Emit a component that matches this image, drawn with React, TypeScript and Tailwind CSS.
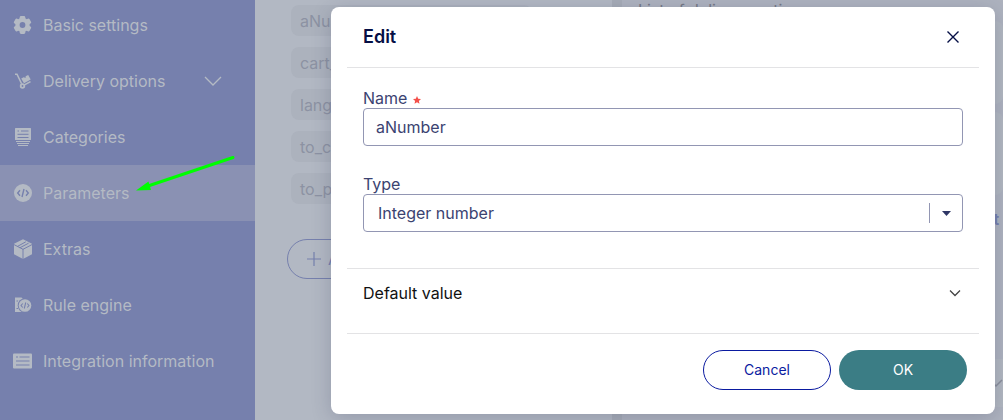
import React, { useState } from 'react';

const CodeMark = ({ cx, cy, s = 1 }: { cx: number; cy: number; s?: number }) => (
  <g transform={`translate(${cx} ${cy}) scale(${s})`} fill="none" stroke="#7680ad" strokeWidth="1.4">
    <path d="M-3 -2.7 L-5.3 0 L-3 2.7 M3 -2.7 L5.3 0 L3 2.7 M1 -4 L-1 4" />
  </g>
);

const icons: Record<string, React.ReactNode> = {
  settings: (
    <>
      <circle cx="9.5" cy="9" r="7.2" />
      {[0, 60, 120].map((angle) => (
        <rect key={angle} x="6.7" y="0" width="5.6" height="18" rx="1.4" transform={`rotate(${angle} 9.5 9)`} />
      ))}
      <circle cx="9.5" cy="9" r="2.9" fill="#7680ad" />
    </>
  ),
  delivery: (
    <>
      <path d="M2 2.2h2l4.6 9.6" fill="none" stroke="currentColor" strokeWidth="1.5" />
      <path d="M8.2 6.6l3-1.6.5 1 1.3-.7-.5-1 2.700-1.400 2.500 4.600-6.700 3.800z" />
      <path d="M11.500 12.800l6-3.200" fill="none" stroke="currentColor" strokeWidth="1.500" />
      <circle cx="9.500" cy="14" r="1.800" fill="none" stroke="currentColor" strokeWidth="1.800" />
    </>
  ),
  categories: (
    <>
      <rect x="2" y="0" width="16" height="12" rx=".5" />
      <path d="M4.500 3h1.500M8 3h7.500M4.500 6.300h11M4.500 9.500h11" stroke="#7680ad" strokeWidth="1" />
      <path d="M3 13.500h14M4 15.500h12M5 17.500h10" stroke="currentColor" strokeWidth="1" />
    </>
  ),
  parameters: (
    <>
      <circle cx="10" cy="9" r="9" />
      <CodeMark cx={10} cy={9} />
    </>
  ),
  extras: (
    <>
      <path d="M10-.8l9 4.600v10.400L10 19 1 14.200V3.800z" />
      <path d="M1 4.600l9 4.700 9-4.700M10 9v10M4.200 6.600l8.600-4.800M6.800 7.800l8.800-4.600" fill="none" stroke="#7680ad" strokeWidth="1" />
    </>
  ),
  rules: (
    <>
      <path d="M2 1.500h6.500l1.500 1.500v13H2z" />
      <circle cx="12" cy="9.500" r="7.300" fill="#7680ad" />
      <circle cx="12" cy="9.500" r="6.300" />
      <path d="M3.500 5h1.500M3.500 12.500h1.500" stroke="#7680ad" />
      <CodeMark cx={12} cy={9.5} s={0.75} />
    </>
  ),
  integration: (
    <>
      <rect x="0" y="1.500" width="19" height="15" rx="1" />
      <path d="M3 5h2M6.500 5h10M3 9h13.500M3 13h13.500" stroke="#7680ad" strokeWidth="1.200" />
    </>
  ),
};

const menu = [
  { icon: 'settings', label: 'Basic settings' },
  { icon: 'delivery', label: 'Delivery options', expandable: true },
  { icon: 'categories', label: 'Categories' },
  { icon: 'parameters', label: 'Parameters', active: true },
  { icon: 'extras', label: 'Extras' },
  { icon: 'rules', label: 'Rule engine' },
  { icon: 'integration', label: 'Integration information' },
];

const parameters = ['aNu', 'cart_', 'lang', 'to_c', 'to_p'];

const Sidebar = () => (
  <nav className="-mt-[3px] w-[255px] shrink-0 bg-[#7680ad] text-[#b4bac4]">
    {menu.map((item) => (
      <a
        key={item.label}
        href="#"
        className={`flex h-14 items-center gap-3 pl-[13px] pr-[33px] ${item.active ? 'bg-[#8a91b3]' : ''}`}
      >
        <svg className="size-[18px] shrink-0 overflow-visible" viewBox="0 0 18 18" fill="currentColor">
          {icons[item.icon]}
        </svg>
        <span className="grow whitespace-nowrap">{item.label}</span>
        {item.expandable && (
          <svg className="h-4 w-[18px]" viewBox="0 0 18 16" fill="none" stroke="currentColor" strokeWidth="1.300">
            <path d="M1 4l8 8 8-8" />
          </svg>
        )}
      </a>
    ))}
  </nav>
);

const Background = () => (
  <main className="flex grow overflow-hidden bg-[#b2b8c3]">
    <div className="w-[357px] shrink-0 pl-8 pt-[5px]">
      <ul className="flex flex-col gap-[11px] pl-1 pr-20">
        {parameters.map((name) => (
          <li key={name} className="flex h-[31px] items-center rounded-lg bg-[#acb2bd] px-[9px] text-[#8c92a3]">
            {name}
          </li>
        ))}
      </ul>
      <button className="mt-[35px] flex h-10 w-44 items-center gap-1.5 rounded-full border border-[#7680ad] px-[18px] text-[#7680ad]">
        <svg className="size-4" viewBox="0 0 16 16" stroke="currentColor" strokeWidth="1.200">
          <path d="M8 1v14M1 8h14" />
        </svg>
        A
      </button>
    </div>
    <div className="w-2.5 shrink-0 bg-[#a6acb7]" />
    <div className="flex grow flex-col bg-[#aeb3bf]">
      <p className="pl-4 leading-[21px] text-[#757986]">List of delivery options</p>
      <div className="flex flex-col gap-2">
        <div className="h-[83px] rounded-lg bg-[#b2b8c1]" />
        <div className="h-[83px] rounded-lg bg-[#b2b8c1]" />
      </div>
      <p className="pr-1 pt-3 text-right font-bold text-[#7680ad]">t</p>
      <div className="mt-32 flex h-12 items-center justify-end bg-[#b2b8c1]">
        <svg className="h-4 w-3" viewBox="0 0 12 16" fill="none" stroke="#8b909c" strokeWidth="1.500">
          <path d="M0 6l5 5 6-6" />
        </svg>
      </div>
    </div>
  </main>
);

const EditDialog = () => {
  const [name, setName] = useState('aNumber');
  const [type, setType] = useState('integer');

  return (
    <div
      role="dialog"
      aria-labelledby="dialog-title"
      className="rounded-lg bg-white px-4 text-[#3b4371] shadow-[0_4px_20px_rgba(40,45,80,0.22)]"
    >
      <header className="flex h-[61px] items-center justify-between border-b border-[#e3e3e5] px-4">
        <h2 id="dialog-title" className="text-lg font-semibold text-[#050f45]">Edit</h2>
        <button aria-label="Close" className="p-px text-[#050f45]">
          <svg className="size-[18px]" viewBox="0 0 18 18" stroke="currentColor" strokeWidth="1.400">
            <path d="M3.500 3.500l11 11M14.500 3.500l-11 11" />
          </svg>
        </button>
      </header>

      <div className="border-b border-[#e3e3e5] px-4 pb-9 pt-5">
        <label htmlFor="name" className="flex items-center gap-1.5 leading-5">
          Name
          <svg className="mt-1 size-2" viewBox="0 0 10 10" fill="#f4504a">
            <path d="M5 0l1.500 3.300 3.500.4-2.600 2.400.7 3.600L5 7.900 1.900 9.700l.7-3.600L0 3.700l3.500-.4z" />
          </svg>
        </label>
        <input
          id="name"
          value={name}
          onChange={(e) => setName(e.target.value)}
          className="block h-[38px] w-full rounded border border-[#9296b3] px-3 outline-none"
        />

        <label htmlFor="type" className="mt-7 block leading-5">Type</label>
        <div className="relative">
          <select
            id="type"
            value={type}
            onChange={(e) => setType(e.target.value)}
            className="block h-[38px] w-full appearance-none rounded border border-[#9296b3] bg-white px-3.5 outline-none"
          >
            <option value="integer">Integer number</option>
            <option value="decimal">Decimal number</option>
            <option value="text">Text</option>
          </select>
          <div className="pointer-events-none absolute inset-y-0 right-3 flex items-center gap-3">
            <span className="h-5 w-px bg-[#9296b3]" />
            <svg className="h-[5px] w-[9px]" viewBox="0 0 9 5" fill="#2f3766">
              <path d="M0 0h9L4.500 5z" />
            </svg>
          </div>
        </div>
      </div>

      <button className="flex w-full items-center justify-between border-b border-[#e3e3e5] px-4 pb-7 pt-3 text-[#111]">
        Default value
        <svg className="h-4 w-4" viewBox="0 0 16 16" fill="none" stroke="#444" strokeWidth="1.300">
          <path d="M3 5.500l5 5 5-5" />
        </svg>
      </button>

      <footer className="flex justify-end gap-2 pb-6 pr-3 pt-4 text-sm">
        <button className="h-10 w-32 rounded-full border border-[#0a1aa0] text-[#0a1aa0]">Cancel</button>
        <button className="h-10 w-32 rounded-full bg-[#3b7d85] text-white">OK</button>
      </footer>
    </div>
  );
};

export default function App() {
  return (
    <div className="relative flex h-screen overflow-hidden font-['Inter',sans-serif] text-base">
      <Sidebar />
      <Background />
      <div className="absolute inset-0 pl-[331px] pr-2 pt-[7px]">
        <EditDialog />
      </div>
      <svg
        className="pointer-events-none absolute left-[136px] top-[154px] h-[38px] w-[100px]"
        viewBox="0 0 100 38"
        fill="#00ff00"
      >
        <path d="M97 3.500L12 32" stroke="#00ff00" strokeWidth="3" strokeLinecap="round" />
        <path d="M0 36.500L12.500 27.500 15 36z" />
      </svg>
    </div>
  );
}
